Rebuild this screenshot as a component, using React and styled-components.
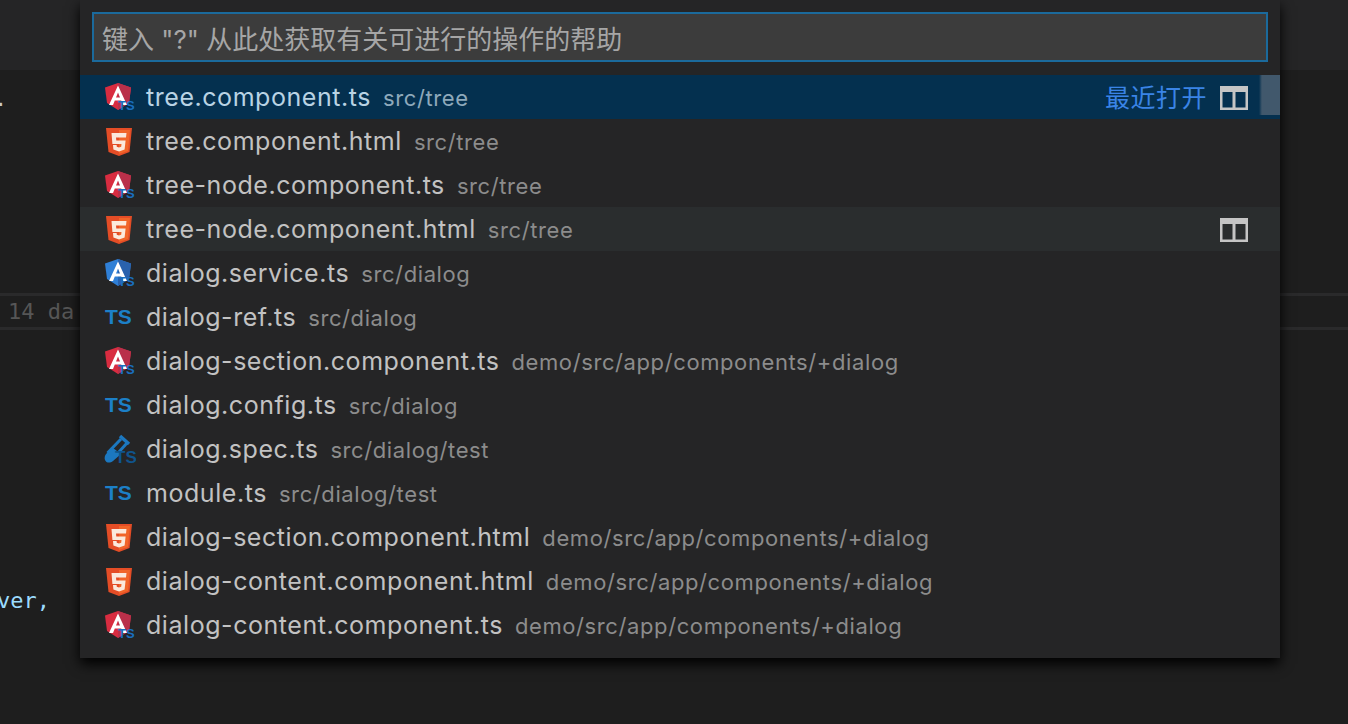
import React from 'react';
import styled, { createGlobalStyle } from 'styled-components';

const GlobalStyle = createGlobalStyle`
	html, body {
		margin: 0;
		padding: 0;
		background: #1e1e1e;
	}
`;

const files = [
	{ icon: 'angular', name: 'tree.component.ts', path: 'src/tree', active: true, recent: true },
	{ icon: 'html', name: 'tree.component.html', path: 'src/tree' },
	{ icon: 'angular', name: 'tree-node.component.ts', path: 'src/tree' },
	{ icon: 'html', name: 'tree-node.component.html', path: 'src/tree', hover: true },
	{ icon: 'service', name: 'dialog.service.ts', path: 'src/dialog' },
	{ icon: 'ts', name: 'dialog-ref.ts', path: 'src/dialog' },
	{ icon: 'angular', name: 'dialog-section.component.ts', path: 'demo/src/app/components/+dialog' },
	{ icon: 'ts', name: 'dialog.config.ts', path: 'src/dialog' },
	{ icon: 'spec', name: 'dialog.spec.ts', path: 'src/dialog/test' },
	{ icon: 'ts', name: 'module.ts', path: 'src/dialog/test' },
	{ icon: 'html', name: 'dialog-section.component.html', path: 'demo/src/app/components/+dialog' },
	{ icon: 'html', name: 'dialog-content.component.html', path: 'demo/src/app/components/+dialog' },
	{ icon: 'angular', name: 'dialog-content.component.ts', path: 'demo/src/app/components/+dialog' },
];

function AngularIcon({ left = '#d82c40', right = '#b9304a' }) {
	return (
		<svg width="32" height="32" viewBox="0 0 32 32">
			<polygon points="14,1 1,5.5 3,21 14,28 25,21 27,5.5" fill={left} />
			<polygon points="14,1 27,5.5 25,21 14,28" fill={right} />
			<path
				d="M14 3.5 L5 23 H9 L10.8 18.5 H17.2 L19 23 H23 Z M14 10.5 L16 15.5 H12 Z"
				fill="#fff"
				fillRule="evenodd"
			/>
			<SvgLabel x="14" y="28" fontSize="13">
				TS
			</SvgLabel>
		</svg>
	);
}

function HtmlIcon() {
	return (
		<svg width="30" height="30" viewBox="0 0 30 30">
			<polygon points="2,1 28,1 25.5,25 15,29 4.5,25" fill="#e44d26" />
			<polygon points="15,3 26,3 24,24 15,27" fill="#f16529" />
			<polygon
				points="7.5,6 22.5,6 22,10.5 12,10.5 12.3,13.5 21.6,13.5 20.6,22.5 15,24.5 9.4,22.5 9,18 12.6,18 12.8,19.8 15,20.6 17.2,19.8 17.5,17 8.4,17"
				fill="#fbe9dc"
			/>
		</svg>
	);
}

function TsIcon() {
	return (
		<svg width="30" height="24" viewBox="0 0 30 24">
			<SvgLabel x="1" y="18" fontSize="21" $bright>
				TS
			</SvgLabel>
		</svg>
	);
}

function SpecIcon() {
	return (
		<svg width="32" height="32" viewBox="0 0 32 32">
			<g fill="none" stroke="#1c78c0">
				<path d="M16 2 L25 10" strokeWidth="3.5" />
				<path d="M17 5 L3.5 19" strokeWidth="3" />
				<path d="M23 9 L14 19" strokeWidth="3" />
			</g>
			<path d="M9 14 L17 20 L9 27 C6 29.5 2 29 1 26 C0 23.5 1 21 3 19 Z" fill="#1c78c0" />
			<SvgLabel x="11" y="29" fontSize="17" $dark>
				TS
			</SvgLabel>
		</svg>
	);
}

function SplitIcon() {
	return (
		<SplitSvg width="28" height="24" viewBox="0 0 28 24">
			<path
				d="M0 0 H28 V24 H0 Z M2.5 6 V21.5 H12.5 V6 Z M15.5 6 V21.5 H25.5 V6 Z"
				fill="#c5c5c5"
				fillRule="evenodd"
			/>
		</SplitSvg>
	);
}

function FileIcon({ type }) {
	if (type === 'angular') return <AngularIcon />;
	if (type === 'service') return <AngularIcon left="#2f7fd6" right="#2a62ad" />;
	if (type === 'html') return <HtmlIcon />;
	if (type === 'spec') return <SpecIcon />;
	return <TsIcon />;
}

export default function App() {
	return (
		<>
			<GlobalStyle />
			<Page>
				<TitleBar />
				<Editor>
					<CodeText $top={13} $shift={-6}>
						.
					</CodeText>
					<Divider>
						<CodeText $faded>14 da</CodeText>
					</Divider>
					<CodeText $top={255} $shift={-3} $blue>
						ver,
					</CodeText>
				</Editor>
				<Palette>
					<Field>
						<Placeholder>键入 "?" 从此处获取有关可进行的操作的帮助</Placeholder>
					</Field>
					<List>
						{files.map((file) => (
							<Row key={file.name} $active={file.active} $hover={file.hover}>
								<IconBox>
									<FileIcon type={file.icon} />
								</IconBox>
								<Name $active={file.active}>{file.name}</Name>
								<Path $active={file.active}>{file.path}</Path>
								<Side>
									{file.recent && <Recent>最近打开</Recent>}
									{(file.active || file.hover) && <SplitIcon />}
								</Side>
							</Row>
						))}
						<Thumb />
					</List>
				</Palette>
			</Page>
		</>
	);
}

const Page = styled.div`
	position: relative;
	width: 1348px;
	height: 724px;
	overflow: hidden;
	background: #1e1e1e;
`;

const TitleBar = styled.div`
	height: 70px;
	background: #252526;
`;

const Editor = styled.div`
	display: flex;
	flex-direction: column;
	align-items: flex-start;
`;

const CodeText = styled.div`
	margin-top: ${(p) => p.$top || 0}px;
	margin-left: ${(p) => p.$shift || 0}px;
	padding-left: ${(p) => (p.$faded ? 8 : 0)}px;
	font-family: 'DejaVu Sans Mono', monospace;
	font-size: 22px;
	line-height: 31px;
	white-space: pre;
	color: ${(p) => (p.$faded ? '#565656' : p.$blue ? '#9cdcfe' : '#c8c8c8')};
`;

const Divider = styled.div`
	box-sizing: border-box;
	width: 100%;
	height: 37px;
	margin-top: 179px;
	border-top: 3px solid #2a2a2b;
	border-bottom: 3px solid #2a2a2b;
`;

const Palette = styled.div`
	position: absolute;
	top: 0;
	left: 80px;
	box-sizing: border-box;
	width: 1200px;
	height: 658px;
	padding-top: 12px;
	background: #252526;
	box-shadow: 0 6px 12px #000;
`;

const Field = styled.div`
	display: flex;
	align-items: center;
	box-sizing: border-box;
	height: 50px;
	margin: 0 12px;
	padding: 0 8px;
	background: #3c3c3c;
	border: 2px solid #1b6a9c;
`;

const Placeholder = styled.div`
	font-family: Inter, 'Noto Sans CJK SC', sans-serif;
	font-size: 26px;
	color: #a6a6a6;
`;

const List = styled.div`
	position: relative;
	margin-top: 13px;
`;

const Row = styled.div`
	display: flex;
	align-items: center;
	box-sizing: border-box;
	height: 44px;
	padding: 1px 32px 0 24px;
	background: ${(p) => (p.$active ? '#04304f' : p.$hover ? '#2a2d2e' : 'transparent')};
`;

const IconBox = styled.div`
	display: flex;
	justify-content: flex-start;
	align-items: center;
	flex: none;
	width: 42px;
`;

const SvgLabel = styled.text`
	font-family: 'Liberation Sans', sans-serif;
	font-weight: 700;
	fill: ${(p) => (p.$bright ? '#1c80c8' : p.$dark ? '#10548c' : '#1a6fc0')};
`;

const SplitSvg = styled.svg`
	margin-top: 1px;
`;

const Name = styled.span`
	margin-top: -2px;
	font-family: Inter, sans-serif;
	font-size: 25px;
	letter-spacing: 0.55px;
	color: ${(p) => (p.$active ? '#b9d3e4' : '#c2c2c2')};
`;

const Path = styled.span`
	margin-left: 12px;
	font-family: Inter, sans-serif;
	font-size: 22px;
	letter-spacing: 0.6px;
	color: ${(p) => (p.$active ? '#8ea9bb' : '#8c8c8c')};
`;

const Side = styled.div`
	display: flex;
	align-items: center;
	gap: 13px;
	margin-left: auto;
`;

const Recent = styled.span`
	margin-top: -4px;
	font-family: 'Noto Sans CJK SC', sans-serif;
	font-size: 25px;
	letter-spacing: 0.5px;
	color: #3a84e6;
`;

const Thumb = styled.div`
	position: absolute;
	top: 0;
	right: 0;
	width: 21px;
	height: 40px;
	background: linear-gradient(to right, #04304f, #41586c 3px);
`;
